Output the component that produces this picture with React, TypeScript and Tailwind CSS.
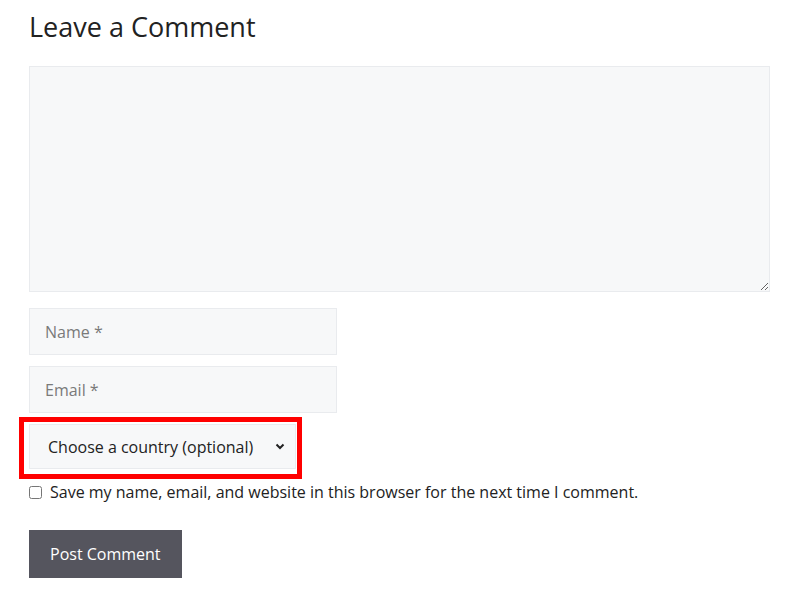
export default function App() {
  const font = { fontFamily: '"Open Sans", "Liberation Sans", sans-serif' };

  return (
    <div
      className="min-h-[600px] w-[800px] bg-white px-[29px] pt-[7px] text-[#222222]"
      style={font}
    >
      <h3 className="text-[27px] leading-[40px] font-normal text-[#222222]">
        Leave a Comment
      </h3>

      <form className="mt-[19px]" onSubmit={(e) => e.preventDefault()}>
        <textarea
          className="block h-[226px] w-[741px] resize-y border border-[#e9ebee] bg-[#f7f8f9] p-3 outline-none"
          aria-label="Comment"
        />

        <input
          type="text"
          placeholder="Name *"
          className="mt-[16px] block h-[47px] w-[308px] border border-[#e9ebee] bg-[#f7f8f9] px-[15px] text-[16px] text-[#222222] outline-none placeholder:text-[#7a7a7a]"
        />
        <input
          type="email"
          placeholder="Email *"
          className="mt-[11px] block h-[47px] w-[308px] border border-[#e9ebee] bg-[#f7f8f9] px-[15px] text-[16px] text-[#222222] outline-none placeholder:text-[#7a7a7a]"
        />

        <div className="relative mt-[11px] w-[267px]">
          <select
            defaultValue=""
            className="block h-[45px] w-[267px] appearance-none border border-[#e9ebee] bg-[#f7f8f9] pl-[18px] pr-8 text-[16px] text-[#222222] outline-none"
          >
            <option value="">Choose a country (optional)</option>
            <option value="us">United States</option>
            <option value="uk">United Kingdom</option>
          </select>
          <svg
            className="pointer-events-none absolute right-[11px] top-[19px]"
            width="10"
            height="7"
            viewBox="0 0 10 7"
            fill="none"
          >
            <path d="M1.5 1.5L5 5L8.5 1.5" stroke="#222222" strokeWidth="2" />
          </svg>
          <div className="pointer-events-none absolute -left-[10px] -right-[6px] -top-[7px] -bottom-[10px] border-[5px] border-[#ff0000]" />
        </div>

        <label className="mt-[11px] flex h-[24px] items-center gap-[8px] text-[16px] text-[#222222]">
          <input type="checkbox" className="m-0 h-[13px] w-[13px]" />
          <span>Save my name, email, and website in this browser for the next time I comment.</span>
        </label>

        <button
          type="submit"
          className="mt-[26px] block h-[48px] bg-[#55555e] px-[21px] text-[16px] text-white"
        >
          Post Comment
        </button>
      </form>
    </div>
  );
}
